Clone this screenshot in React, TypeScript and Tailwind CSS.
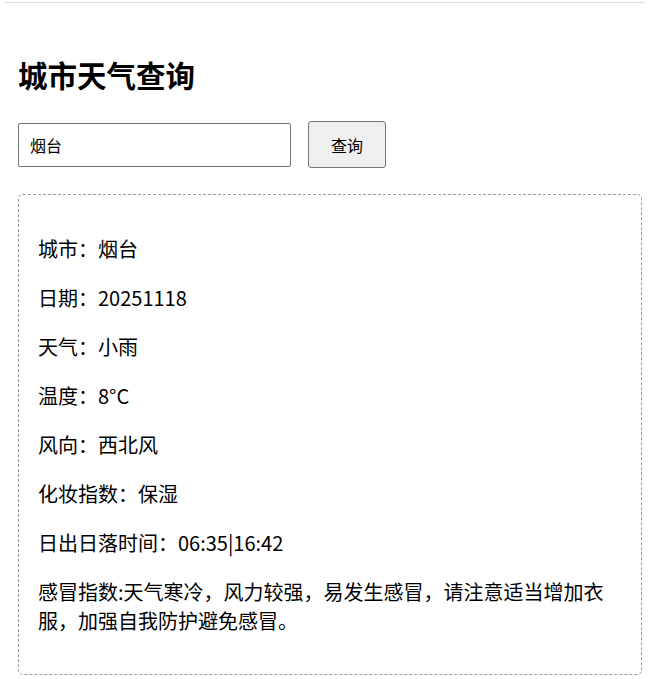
import React from "react";

export default function App() {
  const rows = [
    "城市：烟台",
    "日期：20251118",
    "天气：小雨",
    "温度：8°C",
    "风向：西北风",
    "化妆指数：保湿",
    "日出日落时间：06:35|16:42",
  ];
  return (
    <div
      className="min-h-[679px] bg-white text-black"
      style={{ fontFamily: '"Noto Sans CJK SC", "Noto Sans", sans-serif' }}
    >
      <div className="pt-[2px]">
        <div className="ml-[4px] h-px w-[641px] bg-[#dcdcdc]" />
      </div>
      <div className="pl-[18px]">
        <h1 className="mt-[50px] text-[29.5px] font-bold leading-[1.47]">城市天气查询</h1>
        <div className="mt-[25px] flex items-center gap-[17px]">
          <input
            defaultValue="烟台"
            className="h-[44px] w-[273px] rounded-[2px] border border-[#767676] px-[11px] text-[16px] outline-none"
          />
          <button className="h-[47px] w-[78px] rounded-[3px] border border-[#767676] bg-[#efefef] text-[16px]">
            查询
          </button>
        </div>
        <div className="mt-[26px] w-[624px] rounded-[5px] border border-dashed border-[#9a9a9a] px-[19px] pt-[20px] pb-[18px]">
          {rows.map((r) => (
            <p key={r} className="my-[20px] text-[20px] leading-[1.448]">
              {r}
            </p>
          ))}
          <p className="my-[20px] text-[20px] leading-[1.448]">
            感冒指数:天气寒冷，风力较强，易发生感冒，请注意适当增加衣服，加强自我防护避免感冒。
          </p>
        </div>
      </div>
    </div>
  );
}
